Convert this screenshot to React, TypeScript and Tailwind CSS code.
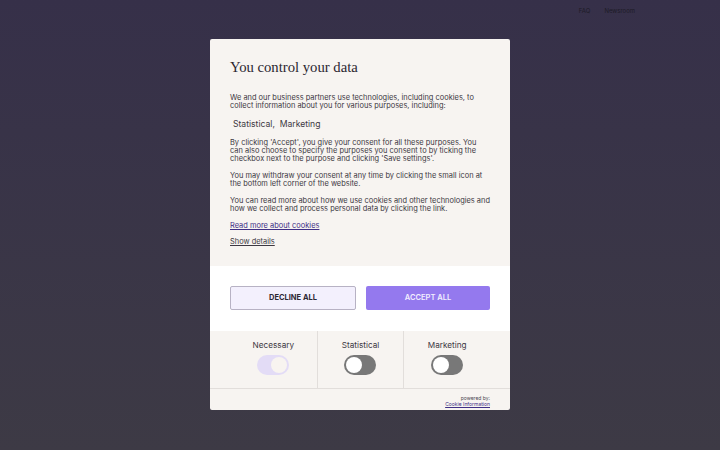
import { useState } from "react";

type Purpose = {
  label: string;
  checked: boolean;
  locked?: boolean;
};

const INITIAL_PURPOSES: Purpose[] = [
  { label: "Necessary", checked: true, locked: true },
  { label: "Statistical", checked: false },
  { label: "Marketing", checked: false },
];

function Toggle({ checked, locked, onChange }: { checked: boolean; locked?: boolean; onChange: () => void })
{
  if (locked) {
    return (
      <div className="flex h-[20px] w-[32px] items-center justify-end rounded-full bg-[#e3dcf6] px-[2px]">
        <div className="h-[16px] w-[16px] rounded-full bg-[#f8f4f0]" />
      </div>
    );
  }
  return (
    <button
      type="button"
      onClick={ onChange }
      className={ `flex h-[20px] w-[32px] items-center rounded-full px-[2px] ${ checked ? "justify-end bg-[#9378ef]" : "justify-start bg-[#787878]" }` }
    >
      <div className="h-[16px] w-[16px] rounded-full bg-white" />
    </button>
  );
}

export default function App()
{
  const [ purposes, setPurposes ] = useState(INITIAL_PURPOSES);

  function toggle(i: number)
  {
    setPurposes((prev) => prev.map((p, idx) => (idx === i ? { ...p, checked: !p.checked } : p)));
  }

  return (
    <div
      className="flex h-[450px] w-[720px] flex-col bg-gradient-to-b from-[#363049] to-[#3d3a45]"
      style={ { fontFamily: "Inter, 'Liberation Sans', sans-serif" } }
    >
      {/* dimmed header behind the overlay */ }
      <div className="flex h-[20px] justify-end gap-[14px] pr-[85px] pt-[6px] text-[6px] text-[#1d1b26]">
        <span>FAQ</span>
        <span>Newsroom</span>
      </div>

      <div className="mt-[19px] ml-[210px] flex w-[300px] flex-col overflow-hidden rounded-[2px] bg-[#f7f4f1]">
        <div className="px-[20px] pt-[18px] pb-[20px] text-[7.45px] leading-[8px] text-[#3d3842]">
          <h1
            className="text-[14.7px] leading-[20px] text-[#2b2630]"
            style={ { fontFamily: "'Liberation Serif', serif" } }
          >
            You control your data
          </h1>
          <p className="mt-[17px]">
            We and our business partners use technologies, including cookies, to collect information about you for various purposes, including:
          </p>
          <p className="mt-[8px] pl-[3px] text-[8.6px] leading-[12px]">
            Statistical,&nbsp; Marketing
          </p>
          <p className="mt-[9px]">
            By clicking 'Accept', you give your consent for all these purposes. You can also choose to specify the purposes you consent to by ticking the checkbox next to the purpose and clicking 'Save settings'.
          </p>
          <p className="mt-[9px]">
            You may withdraw your consent at any time by clicking the small icon at the bottom left corner of the website.
          </p>
          <p className="mt-[9px]">
            You can read more about how we use cookies and other technologies and how we collect and process personal data by clicking the link.
          </p>
          <a href="#" className="mt-[9px] block text-[#3f2f86] underline">
            Read more about cookies
          </a>
          <a href="#" className="mt-[8px] block text-[#3d3842] underline">
            Show details
          </a>
        </div>

        <div className="flex gap-[10px] bg-white px-[20px] pt-[20px] pb-[21px]">
          <button
            type="button"
            className="h-[24px] flex-1 rounded-[2px] border border-[#b7b2c4] bg-[#f3f0fd] text-[7.5px] font-bold text-[#2d2934]"
          >
            DECLINE ALL
          </button>
          <button
            type="button"
            className="h-[24px] flex-1 rounded-[2px] bg-[#9479ee] text-[7.5px] font-semibold text-[#f3efff]"
          >
            ACCEPT ALL
          </button>
        </div>

        <div className="grid grid-cols-3 border-b border-[#e2dedb] px-[20px]">
          { purposes.map((p, i) => (
            <div
              key={ p.label }
              className={ `flex h-[57px] flex-col items-center pt-[9px] ${ i > 0 ? "border-l border-[#e2dedb]" : "" }` }
            >
              <span className="text-[8.2px] leading-[10px] text-[#3d3842]">{ p.label }</span>
              <div className="mt-[5px]">
                <Toggle checked={ p.checked } locked={ p.locked } onChange={ () => toggle(i) } />
              </div>
            </div>
          )) }
        </div>

        <div className="flex flex-col items-end px-[20px] pt-[6px] pb-[3px] text-[5px] leading-[6px]">
          <span className="text-[#4a4550]">powered by:</span>
          <a href="#" className="text-[#3f2f86] underline">Cookie Information</a>
        </div>
      </div>
    </div>
  );
}
